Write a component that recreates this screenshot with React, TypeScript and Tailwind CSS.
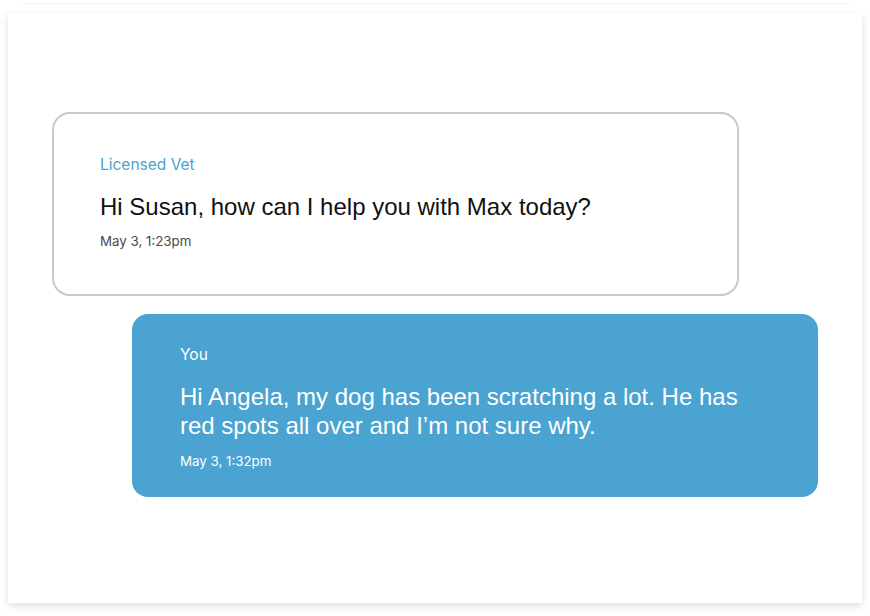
type Message = {
  author: string;
  body: string;
  time: string;
  mine?: boolean;
};

const messages: Message[] = [
  {
    author: "Licensed Vet",
    body: "Hi Susan, how can I help you with Max today?",
    time: "May 3, 1:23pm",
  },
  {
    author: "You",
    body: "Hi Angela, my dog has been scratching a lot. He has red spots all over and I’m not sure why.",
    time: "May 3, 1:32pm",
    mine: true,
  },
];

function Bubble({ message }: { message: Message }) {
  const { author, body, time, mine } = message;

  return (
    <div
      className={
        mine
          ? "flex h-[183px] w-[686px] flex-col justify-center self-end rounded-[16px] bg-[#4ba3d1] px-[48px] pt-[4px] text-white"
          : "flex h-[184px] w-[687px] flex-col justify-center self-start rounded-[18px] border-2 border-[#c9c9c9] bg-white px-[46px] pb-[4px]"
      }
    >
      <p
        className={
          mine
            ? "font-['Inter',sans-serif] text-[15.5px] leading-[20px] text-white"
            : "font-['Inter',sans-serif] text-[15.5px] leading-[20px] text-[#4ba3d1]"
        }
      >
        {author}
      </p>
      <p
        className={
          mine
            ? "mt-[17px] font-['Liberation_Sans',Arial,sans-serif] text-[24px] leading-[29px] text-white"
            : "mt-[17px] font-['Liberation_Sans',Arial,sans-serif] text-[24px] leading-[29px] text-[#111111]"
        }
      >
        {body}
      </p>
      <p
        className={
          mine
            ? "mt-[12px] font-['Inter',sans-serif] text-[13.3px] leading-[18px] text-white"
            : "mt-[11px] font-['Inter',sans-serif] text-[13.3px] leading-[18px] text-[#4a4a4a]"
        }
      >
        {time}
      </p>
    </div>
  );
}

export default function App() {
  return (
    <div className="h-[616px] w-[870px] overflow-hidden bg-white">
      <div className="mx-[20px] mt-[3px] h-px bg-[#f4f4f4]" />
      <div className="mx-[8px] mt-[9px] flex h-[590px] flex-col gap-[18px] bg-white px-[44px] pt-[99px] shadow-[0_3px_8px_rgba(0,0,0,0.13)]">
        {messages.map((message) => (
          <Bubble key={message.time} message={message} />
        ))}
      </div>
    </div>
  );
}
